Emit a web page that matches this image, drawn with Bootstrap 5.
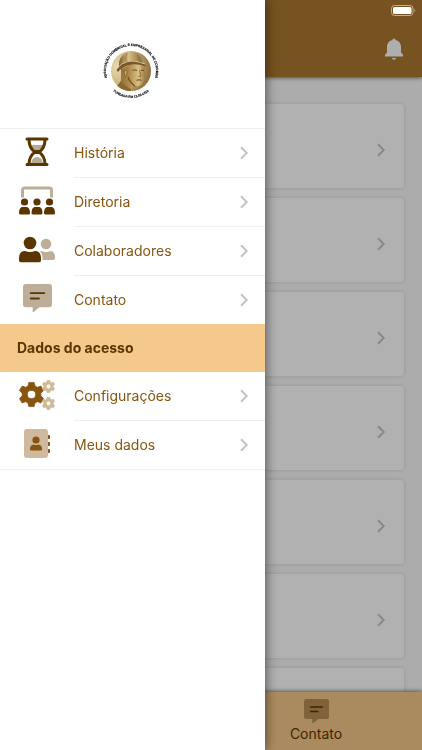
<!DOCTYPE html>
<html lang="pt-BR">
<head>
<meta charset="utf-8">
<meta name="viewport" content="width=device-width, initial-scale=1">
<title>Associação Comercial</title>
<link href="https://cdn.jsdelivr.net/npm/bootstrap@5.3.0/dist/css/bootstrap.min.css" rel="stylesheet">
<style>
body{font-family:Inter,"Liberation Sans",sans-serif;background:#f7f7f7;font-size:14px;line-height:20px;color:#885510}
svg{display:block;flex:none}
.topbar{height:77px;background:#aa772e;box-shadow:0 1px 4px rgba(0,0,0,.55);z-index:2}
.feed{padding:27px 18px 0;flex:1 1 0;min-height:0}
.entries{gap:10px}
.entry{height:84px;background:#fefefe;border-radius:4px;box-shadow:0 0 4px rgba(0,0,0,.15);padding:8px 18px 0;flex:none;color:#c3c3c6}
.tabs{height:58px;background:#f4c88a;box-shadow:0 -1px 4px rgba(0,0,0,.5);z-index:2;padding:7px 0 0 265px}
.tabs a{width:102px;color:#5a3500}
.shade{background:rgba(0,0,0,.3);z-index:10}
.drawer{width:265px;z-index:20;box-shadow:0 0 12px rgba(0,0,0,.6)}
.brand{height:129px;border-bottom:1px solid #efefef;padding-top:18px}
.entry-row{height:49px;color:#885510;padding-left:16px}
.entry-row:hover{color:#5a3500}
.pic{width:42px;margin-right:16px}
.label-cell{border-bottom:1px solid #efefef;padding-right:16px;color:#885510}
.last-row{height:48px}
.last-row .label-cell{border-bottom:0}
.end-row{border-bottom:1px solid #efefef}
.end-row .label-cell{border-bottom:0}
.section-title{height:48px;background:#f5c98b;color:#5a3500;font-size:14px;padding-left:17px}
.battery{z-index:30;padding:5px 6px}
.dark{color:#5a3500}
.tan{color:#c3c3c6}
</style>
<script src="https://cdn.jsdelivr.net/npm/bootstrap@5.3.0/dist/js/bootstrap.bundle.min.js"></script>
</head>
<body>
<svg width="0" height="0" class="position-absolute" aria-hidden="true">
  <defs>
    <symbol id="chev" viewBox="0 0 10 14"><path d="M2 1.300 7.700 7 2 12.700" fill="none" stroke="currentColor" stroke-width="2"/></symbol>
    <symbol id="talk" viewBox="0 0 30 30"><path d="M3 0h24a3 3 0 0 1 3 3v18a3 3 0 0 1-3 3H17l-6 5q-1 .6-1-.5V24H3a3 3 0 0 1-3-3V3a3 3 0 0 1 3-3z" fill="currentColor" opacity=".4"/><path d="M8 9.500h14M8 15h8.500" stroke="currentColor" stroke-width="1.900" stroke-linecap="round"/></symbol>
    <symbol id="person" viewBox="0 0 22 26"><circle cx="11" cy="6.500" r="6.300"/><path d="M6 14.500q5 2 10 0 6 0 6 7.500v1.500a2.500 2.500 0 0 1-2.500 2.500h-17A2.500 2.500 0 0 1 0 23.500V22q0-7.500 6-7.500z"/></symbol>
    <symbol id="cog" viewBox="-14 -14 28 28"><path fill-rule="evenodd" d="M-3-13.500h6l1 4 2.500 1.500 4-1.500 3 5-3 3v3l3 3-3 5-4-1.500L4 9.500l-1 4h-6l-1-4L-6.500 8l-4 1.500-3-5 3-3v-3l-3-3 3-5 4 1.500L-4-9.500zM4.600 0a4.600 4.600 0 1 0-9.200 0 4.600 4.600 0 1 0 9.200 0z" fill="currentColor" stroke="currentColor" stroke-width=".8" stroke-linejoin="round"/></symbol>
  </defs>
</svg>

<div class="vh-100 d-flex flex-column overflow-hidden">
  <header class="topbar d-flex justify-content-end align-items-end px-3 pb-3 flex-shrink-0">
    <button class="btn p-0 border-0" type="button" aria-label="Notificações">
      <svg width="24" height="24" viewBox="0 0 24 24" fill="#fafafa"><path d="M12 1.500a1.600 1.600 0 0 1 1.600 1.600C17.500 4 19 7 19 10.200v5.300l2 2.300V19.500H3v-1.700l2-2.300v-5.300C5 7 6.500 4 10.400 3.100A1.600 1.600 0 0 1 12 1.500zM10 21h4a2 1.700 0 0 1-4 0z"/></svg>
    </button>
  </header>
  <main class="feed d-flex flex-column overflow-hidden">
    <div class="entries d-flex flex-column">
      <div class="entry d-flex align-items-center justify-content-end"><svg width="10" height="14"><use href="#chev"/></svg></div>
      <div class="entry d-flex align-items-center justify-content-end"><svg width="10" height="14"><use href="#chev"/></svg></div>
      <div class="entry d-flex align-items-center justify-content-end"><svg width="10" height="14"><use href="#chev"/></svg></div>
      <div class="entry d-flex align-items-center justify-content-end"><svg width="10" height="14"><use href="#chev"/></svg></div>
      <div class="entry d-flex align-items-center justify-content-end"><svg width="10" height="14"><use href="#chev"/></svg></div>
      <div class="entry d-flex align-items-center justify-content-end"><svg width="10" height="14"><use href="#chev"/></svg></div>
      <div class="entry d-flex align-items-center justify-content-end"><svg width="10" height="14"><use href="#chev"/></svg></div>
    </div>
  </main>
  <nav class="tabs flex-shrink-0">
    <a href="#contato" class="d-flex flex-column align-items-center text-decoration-none"><svg width="25" height="25"><use href="#talk"/></svg>Contato</a>
  </nav>
</div>

<div class="shade position-fixed top-0 start-0 w-100 h-100"></div>

<aside class="drawer position-fixed top-0 start-0 h-100 bg-white overflow-auto" aria-label="Menu">
  <div class="brand d-flex align-items-center justify-content-center">
    <svg width="64" height="64" viewBox="0 0 64 64" role="img" aria-label="Associação Comercial e Empresarial de Corumbá">
      <defs>
        <radialGradient id="gold" cx=".2" cy=".4" r=".9"><stop offset="0" stop-color="#e9dcb4"/><stop offset=".5" stop-color="#cbb37c"/><stop offset="1" stop-color="#7a5a28"/></radialGradient>
        <linearGradient id="skin" x1="0" x2="1"><stop offset="0" stop-color="#8a6732"/><stop offset=".4" stop-color="#ab8648"/><stop offset=".75" stop-color="#d9c086"/><stop offset="1" stop-color="#9a7840"/></linearGradient>
        <linearGradient id="helm" x1="0" x2="1"><stop offset="0" stop-color="#7b5b2b"/><stop offset=".4" stop-color="#d8c088"/><stop offset="1" stop-color="#856333"/></linearGradient>
        <clipPath id="disc"><circle cx="30" cy="30" r="20"/></clipPath>
        <path id="arcTop" d="M9.400 44.100A25 25 0 1 1 50.600 44.100"/>
        <path id="arcBottom" d="M8.300 46A27 27 0 0 0 51.700 46"/>
      </defs>
      <circle cx="30" cy="30" r="20" fill="url(#gold)"/>
      <g clip-path="url(#disc)">
        <path d="M20 28l10-5 13 1 1.500 8-1 6-2.500 5-4 2.500-5-1-2 6H16l4-11z" fill="url(#skin)"/>
        <path d="M18 26q-1-10 7-14 11-3 15 5l2 6q-12-3-24 5z" fill="url(#helm)"/>
        <path d="M15.500 29q3-6 10.500-8.500 9-2.500 19 2.500l-.5 2.500q-9-3.500-16.500-1.500-6 1.500-11 7z" fill="#79572a"/>
        <path d="M16 27.500q4-5.500 11-7t17.500 2.700" stroke="#e6d39d" fill="none" stroke-width=".9"/>
        <path d="M26 12q-2 5-1 9M36 13q2 3 2.500 7" stroke="#94713a" stroke-width=".8" fill="none"/>
        <path d="M31.500 29.500q2-1.500 4.500 0M40 29.500q1.500-1 3 0M35.500 39.300q2.500-1 5 0" stroke="#593c16" fill="none" stroke-width=".9"/>
        <path d="M38.500 29.500l1.500 5.500-2.500.7" stroke="#76562a" fill="none" stroke-width=".7"/>
        <path d="M23 30q3-1.500 3 1.500t-2 4.500z" fill="#c7a96c" stroke="#6b4c20" stroke-width=".6"/>
        <path d="M27 36q2 6 7 9" stroke="#70501f" stroke-width="1.200" fill="none"/>
        <path d="M14 47q4-4 6-7 4 6 10 8v4H14z" fill="#8a6732"/>
      </g>
      <g font-family="Liberation Sans, sans-serif" font-weight="700" font-size="3.200" fill="#101014" stroke="#101014" stroke-width=".15" text-anchor="middle">
        <text><textPath href="#arcTop" startOffset="50%">ASSOCIAÇÃO COMERCIAL E EMPRESARIAL DE CORUMBÁ</textPath></text>
        <text><textPath href="#arcBottom" startOffset="50%">FUNDADA EM 12-02-1910</textPath></text>
      </g>
    </svg>
  </div>

  <nav>
    <a href="#historia" class="entry-row d-flex text-decoration-none">
      <span class="pic dark d-flex align-items-start justify-content-center pt-2"><svg width="24" height="30" viewBox="0 0 24 30"><path d="M6 8h12q-2 5-6 6-4-1-6-6zM6 26q1-6 6-6t6 6z" fill="#b8aa94"/><path d="M4 2.500C4 10 7 13 10 15c-3 2-6 5-6 12.500M20 2.500c0 7.500-3 10.500-6 12.500 3 2 6 5 6 12.500" fill="none" stroke="currentColor" stroke-width="3"/><path d="M9 13h6v4H9z" fill="currentColor"/><path d="M2 2h20M2 27.500h20" stroke="currentColor" stroke-width="3" stroke-linecap="round"/></svg></span>
      <span class="label-cell d-flex align-items-center justify-content-between flex-grow-1">História<svg class="tan" width="10" height="14"><use href="#chev"/></svg></span>
    </a>
    <a href="#diretoria" class="entry-row d-flex text-decoration-none">
      <span class="pic dark d-flex align-items-start justify-content-center pt-2"><svg width="36" height="30" viewBox="0 0 36 30" fill="currentColor"><path d="M3.500 11.500V4a2 2 0 0 1 2-2h25a2 2 0 0 1 2 2v7.500" fill="none" stroke="#bdae98" stroke-width="3"/><circle cx="5.500" cy="16" r="3.600"/><circle cx="18" cy="16" r="3.600"/><circle cx="30.500" cy="16" r="3.600"/><path d="M3 21h5q3 1 3 6a1.500 1.500 0 0 1-1.500 1.500h-8A1.500 1.500 0 0 1 0 27q0-5 3-6zM15.500 21h5q3 1 3 6a1.500 1.500 0 0 1-1.500 1.500h-8a1.500 1.500 0 0 1-1.500-1.500q0-5 3-6zM28 21h5q3 1 3 6a1.500 1.500 0 0 1-1.500 1.500h-8A1.500 1.500 0 0 1 25 27q0-5 3-6z"/></svg></span>
      <span class="label-cell d-flex align-items-center justify-content-between flex-grow-1">Diretoria<svg class="tan" width="10" height="14"><use href="#chev"/></svg></span>
    </a>
    <a href="#colaboradores" class="entry-row d-flex text-decoration-none">
      <span class="pic dark d-flex align-items-start justify-content-center pt-2"><svg width="36" height="28" viewBox="0 -1.500 36 28"><use href="#person" width="22" height="26" fill="currentColor"/><g fill="#bdae98"><circle cx="27" cy="7.500" r="5.300"/><path d="M22 14.500q5 2 10 0 4 1 4 6v1a2 2 0 0 1-2 2H23.500q.5-6-2.500-8.500z"/></g></svg></span>
      <span class="label-cell d-flex align-items-center justify-content-between flex-grow-1">Colaboradores<svg class="tan" width="10" height="14"><use href="#chev"/></svg></span>
    </a>
    <a href="#contato" class="entry-row last-row d-flex text-decoration-none">
      <span class="pic dark d-flex align-items-start justify-content-center pt-2"><svg width="29" height="29"><use href="#talk"/></svg></span>
      <span class="label-cell d-flex align-items-center justify-content-between flex-grow-1">Contato<svg class="tan" width="10" height="14"><use href="#chev"/></svg></span>
    </a>
    <h2 class="section-title d-flex align-items-center fw-bold m-0">Dados do acesso</h2>
    <a href="#configuracoes" class="entry-row d-flex text-decoration-none">
      <span class="pic d-flex align-items-start justify-content-center pt-2"><svg width="36" height="30" viewBox="0 0 36 30"><use href="#cog" x="0" y="1" width="25" height="27"/><g color="#cfb996"><use href="#cog" x="23" y="0" width="13" height="13"/><use href="#cog" x="23" y="17" width="13" height="13"/></g></svg></span>
      <span class="label-cell d-flex align-items-center justify-content-between flex-grow-1">Configurações<svg class="tan" width="10" height="14"><use href="#chev"/></svg></span>
    </a>
    <a href="#dados" class="entry-row end-row d-flex text-decoration-none">
      <span class="pic d-flex align-items-start justify-content-center pt-2"><svg width="26" height="29" viewBox="0 0 26 29" fill="currentColor"><rect width="24" height="29" rx="3" fill="#cfb99f"/><path d="M24 6h1q1 0 1 1v2q0 1-1 1h-1zM24 13h1q1 0 1 1v2q0 1-1 1h-1zM24 20h1q1 0 1 1v2q0 1-1 1h-1z"/><circle cx="12" cy="11" r="3.600"/><path d="M9.500 15.500q2.500 1 5 0 3.500.5 3.500 5 0 1-1 1H7q-1 0-1-1 0-4.500 3.500-5z"/></svg></span>
      <span class="label-cell d-flex align-items-center justify-content-between flex-grow-1">Meus dados<svg class="tan" width="10" height="14"><use href="#chev"/></svg></span>
    </a>
  </nav>
</aside>

<div class="battery position-fixed top-0 end-0">
  <svg width="25" height="11" viewBox="0 0 25 11"><rect x=".5" y=".5" width="21.500" height="10" rx="3" fill="none" stroke="#c4ad8d"/><rect x="2" y="2" width="18.500" height="7" rx="1.500" fill="#fff"/><path d="M23.500 3.500q1.500 2 0 4z" fill="#c4ad8d"/></svg>
</div>
</body>
</html>
